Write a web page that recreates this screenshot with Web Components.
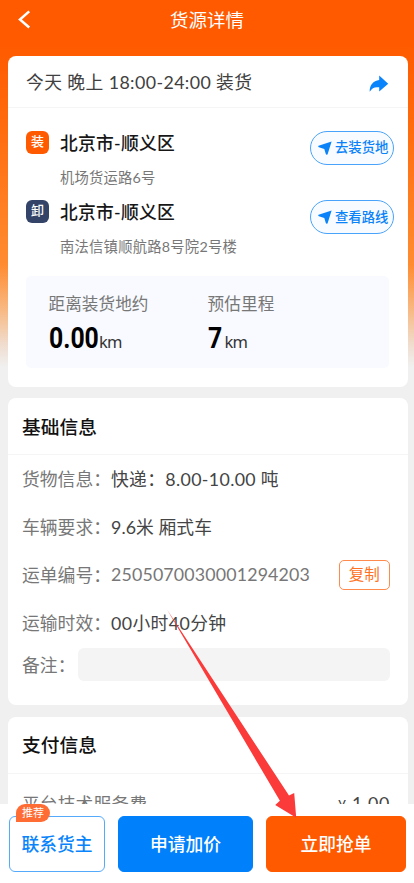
<!DOCTYPE html>
<html lang="zh-CN">
<head>
<meta charset="utf-8">
<title>货源详情</title>
<style>
html,body{margin:0;height:100%}
body{font-family:Lato,"Noto Sans CJK SC",sans-serif;color:#404040;overflow:hidden}
</style>
</head>
<body>
<freight-app></freight-app>
<script>
const define = (name, html) => customElements.define(name, class extends HTMLElement {
  constructor() {
    super();
    this.attachShadow({mode: 'open'}).innerHTML = html;
  }
});

/* Single line of text; "w" sets its drawn advance width through letter spacing. */
customElements.define('fit-text', class extends HTMLElement {
  constructor() {
    super();
    this.attachShadow({mode: 'open'}).innerHTML =
      '<style>:host{display:inline-block;white-space:pre;flex:none}span{display:inline-block}</style><span><slot></slot></span>';
  }
  connectedCallback() {
    const w = parseFloat(this.getAttribute('w'));
    if (!w) return;
    const span = this.shadowRoot.querySelector('span');
    const n = [...this.textContent].length;
    const natural = span.getBoundingClientRect().width;
    span.style.letterSpacing = ((w - natural) / n) + 'px';
  }
});

define('nav-header', `<style>
:host{display:grid;grid-template-columns:48px 1fr 48px;align-items:center;height:40px;flex:none;color:#fff;font-size:18.5px}
svg{display:block;margin-left:17px}
.t{text-align:center;line-height:40px;margin-top:-1px}
</style><svg width="14" height="20" viewBox="0 0 14 20"><path d="M12.200 1.400 3 9.500l9.200 8" fill="none" stroke="#fff" stroke-width="2.500"/></svg>
<div class="t"><slot></slot></div>`);

define('info-card', `<style>
:host{display:block;background:#fff;border-radius:8px;flex:none;box-sizing:border-box}
.h{display:flex;align-items:center;justify-content:space-between;box-sizing:border-box;border-bottom:1px solid #f5f5f5;height:var(--head,57px);padding:0 19px 2px 14px}
</style><div class="h"><slot name="head"></slot></div><slot></slot>`);

define('share-icon', `<style>:host{display:block}svg{display:block}</style>
<svg width="20" height="18" viewBox="0 0 20 18"><path d="M10.200.6 19.200 8.700 10.200 16.400V12.300C5.500 11.700 3.300 12.800.7 16.700.4 10.200 4.300 5.400 10.200 4.900Z" fill="#0a84fb"/></svg>`);

define('route-button', `<style>
:host{display:flex;align-items:center;box-sizing:border-box;width:84px;height:33.500px;border:1.500px solid #4aa3fb;border-radius:17px;background:#f8fbff;color:#0a82f8;font-size:13.300px;font-weight:500;padding-left:6.500px;gap:3.500px}
svg{flex:none}
::slotted(*){margin-top:-2px}
</style><svg width="14" height="14" viewBox="0 0 14 14"><path d="M.6 4.800 13.600.4 9.600 13.200Q8.500 14.400 7.800 13L6.300 8 .9 6.200Q-.4 5.300.6 4.800Z" fill="#0a82f8"/></svg><slot></slot>`);

define('route-stop', `<style>
:host{display:grid;grid-template-columns:34px 1fr auto;height:69.400px;box-sizing:border-box}
.tag{width:23px;height:23px;border-radius:6px;background:var(--tag);color:#fff;font-size:13px;font-weight:500;line-height:21.500px;text-align:center}
.c{color:#171717;font-size:17.800px;font-weight:500;line-height:24px}
.a{color:#777;font-size:14.300px;line-height:20px;margin-top:12.500px}
</style><div class="tag"><slot name="tag"></slot></div><div><div class="c"><slot name="city"></slot></div><div class="a"><slot name="addr"></slot></div></div><slot name="action"></slot>`);

define('distance-stat', `<style>
:host{display:block}
.l{font-size:16.600px;line-height:24px;color:#777}
.v{display:flex;align-items:baseline;height:40px;line-height:40px;margin-top:2px}
.n{font:700 29.500px/40px Roboto,sans-serif;color:#000;width:var(--nw)}
.n span{display:inline-block;transform:scaleX(.84);transform-origin:0 50%}
.u{font:16.500px "Noto Sans",sans-serif;color:#333}
</style><div class="l"><slot name="label"></slot></div><div class="v"><div class="n"><span><slot name="num"></slot></span></div><div class="u"><slot name="unit"></slot></div></div>`);

define('info-row', `<style>
:host{display:flex;align-items:center;height:var(--rh,48px);padding:0 18px 0 14px;font-size:17.800px;box-sizing:border-box}
.l{width:var(--lw,89px);flex:none;color:#777;margin-top:-2px}
.v{flex:1;display:flex;align-items:center;justify-content:space-between;color:var(--vc,#444)}
.v ::slotted(fit-text){margin-top:-2px}
</style><div class="l"><slot name="label"></slot></div><div class="v"><slot></slot></div>`);

define('copy-button', `<style>
:host{display:block;box-sizing:border-box;width:51.500px;height:30.500px;border:1.300px solid #ff8a4d;border-radius:5px;color:#ff7224;font-size:15.500px;line-height:27.500px;text-align:center}
</style><slot></slot>`);

define('note-field', `<style>:host{display:block;flex:1;height:33.500px;border-radius:6px;background:#f4f4f4}</style>`);

define('action-button', `<style>
:host{display:flex;position:relative;box-sizing:border-box;height:56px;border-radius:6px;align-items:center;justify-content:center;background:var(--bg);color:var(--fg,#fff);border:1.300px solid var(--bd,var(--bg));font-size:17.800px;font-weight:500;padding-bottom:3px}
::slotted([slot=badge]){position:absolute;left:6px;top:-13px;width:34px;height:18px;background:#ff6d34;border-radius:9px 9px 9px 0;color:#fff;font-size:11px;font-weight:400;line-height:17.500px;text-align:center}
</style><slot></slot><slot name="badge"></slot>`);

define('bottom-bar', `<style>
:host{display:grid;grid-template-columns:96px 135px 140px;column-gap:13px;height:79px;box-sizing:border-box;background:#fff;padding:12px 8px 0 9px;flex:none;position:relative}
</style><slot></slot>`);

define('pointer-arrow', `<style>:host{position:absolute;left:0;top:0;pointer-events:none}svg{display:block}</style>
<svg width="414" height="883"><path d="M167 609.500 289 795.500 294.200 793 296.200 817.800 275.200 805 279.900 800.800Z" fill="#fb3a3a"/></svg>`);

define('freight-app', `<style>
:host{display:flex;flex-direction:column;position:relative;width:414px;height:883px;overflow:hidden;background:#f0f0f0 linear-gradient(180deg,#ff5a00 0,#ff5a00 45px,#ff6a0c 120px,#ff7d20 200px,#ff8c31 265px,#f8b983 310px,#f0ddcf 345px,#f0f0f0 367px)}
.body{flex:1;min-height:0;overflow:hidden;display:flex;flex-direction:column;gap:11.500px;padding:16px 6px 0 8px}
.first{--head:52px;height:330.500px}
.first .time{font-size:17.800px;font-weight:400;padding-left:4px}
.first share-icon{padding-top:6px}
.stops{padding:23px 14px 0 18px}
route-stop:nth-child(2){--tag:#334468}
route-stop:nth-child(1){--tag:#ff5a00}
.stats{display:grid;grid-template-columns:159px 1fr;margin:6px 19px 0 18px;height:92.500px;box-sizing:border-box;background:#f8faff;border-radius:5px;padding:16px 0 0 22.500px}
.ttl{font-size:18.700px;font-weight:500;color:#111}
.basic{height:307px}
.pay{height:180px}
</style>
<nav-header><fit-text w="74">货源详情</fit-text></nav-header>
<div class="body">
<info-card class="first">
  <fit-text slot="head" class="time" w="226.500">今天 晚上 18:00-24:00 装货</fit-text><share-icon slot="head"></share-icon>
  <div class="stops">
    <route-stop><span slot="tag">装</span><fit-text slot="city" w="115">北京市-顺义区</fit-text><fit-text slot="addr" w="95.500">机场货运路6号</fit-text><route-button slot="action"><fit-text w="53.500">去装货地</fit-text></route-button></route-stop>
    <route-stop><span slot="tag">卸</span><fit-text slot="city" w="115">北京市-顺义区</fit-text><fit-text slot="addr" w="177">南法信镇顺航路8号院2号楼</fit-text><route-button slot="action"><fit-text w="53.500">查看路线</fit-text></route-button></route-stop>
  </div>
  <div class="stats">
    <distance-stat style="--nw:50.500px"><fit-text slot="label" w="100">距离装货地约</fit-text><span slot="num">0.00</span><fit-text slot="unit" w="22.500">km</fit-text></distance-stat>
    <distance-stat style="--nw:17px"><fit-text slot="label" w="67">预估里程</fit-text><span slot="num">7</span><fit-text slot="unit" w="22.500">km</fit-text></distance-stat>
  </div>
</info-card>
<info-card class="basic">
  <fit-text slot="head" class="ttl" w="75">基础信息</fit-text>
  <info-row><fit-text slot="label" w="89">货物信息：</fit-text><fit-text w="168">快递：8.00-10.00 吨</fit-text></info-row>
  <info-row><fit-text slot="label" w="89">车辆要求：</fit-text><fit-text w="101">9.6米 厢式车</fit-text></info-row>
  <info-row style="--vc:#777"><fit-text slot="label" w="89">运单编号：</fit-text><fit-text w="199">2505070030001294203</fit-text><copy-button>复制</copy-button></info-row>
  <info-row><fit-text slot="label" w="89">运输时效：</fit-text><fit-text w="115.500">00小时40分钟</fit-text></info-row>
  <info-row style="--lw:55.500px;--rh:35px"><fit-text slot="label" w="53.500">备注：</fit-text><note-field></note-field></info-row>
</info-card>
<info-card class="pay">
  <fit-text slot="head" class="ttl" w="75">支付信息</fit-text>
  <info-row style="--rh:60px"><fit-text slot="label" w="125">平台技术服务费</fit-text><span></span><fit-text w="52"><span style="font-size:14px">¥</span> 1.00</fit-text></info-row>
</info-card>
</div>
<bottom-bar>
  <action-button style="--bg:#fff;--fg:#0a84fb;--bd:#55aafc"><fit-text w="71">联系货主</fit-text><span slot="badge">推荐</span></action-button>
  <action-button style="--bg:#0080fb"><fit-text w="71">申请加价</fit-text></action-button>
  <action-button style="--bg:#ff5a00"><fit-text w="71">立即抢单</fit-text></action-button>
</bottom-bar>
<pointer-arrow></pointer-arrow>`);
</script>
</body>
</html>
